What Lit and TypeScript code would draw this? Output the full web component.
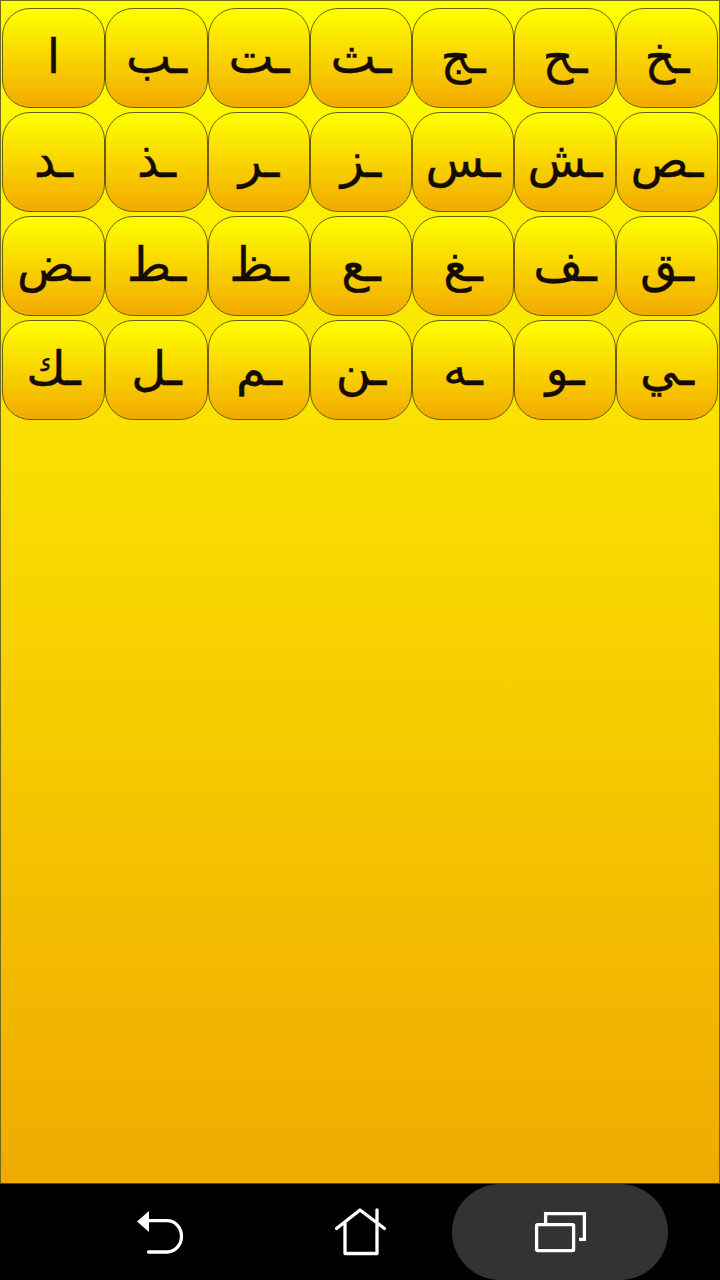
import { LitElement, html, css } from "lit";
import { customElement } from "lit/decorators.js";

const LETTERS = ["ا","ـب","ـت","ـث","ـج","ـح","ـخ","ـد","ـذ","ـر","ـز","ـس","ـش","ـص","ـض","ـط","ـظ","ـع","ـغ","ـف","ـق","ـك","ـل","ـم","ـن","ـه","ـو","ـي"];

@customElement("app-root")
export class AppRoot extends LitElement {
  static styles = css`
    :host { display: flex; flex-direction: column; width: 720px; height: 1280px; font-family: "DejaVu Sans", sans-serif; }
    .main { box-sizing: border-box; height: 1184px; border: 1px solid #6b6b1a; border-bottom: 1px solid #5a4a00; background: linear-gradient(#ffff00, #f0aa00); padding: 7px 1px 0; }
    .grid { display: grid; grid-template-columns: 103px 103px repeat(5, 102px); grid-auto-rows: 100px; row-gap: 4px; }
    .key { box-sizing: border-box; border: 1px solid #6a5c10; border-radius: 28px; background: linear-gradient(#ffff00, #f2aa00); display: flex; align-items: center; justify-content: center; font-size: 48px; line-height: 1; color: #140c00; direction: rtl; padding-bottom: 4px; -webkit-text-stroke: 0.4px #140c00; }
    .nav { flex: 1; background: #000; display: flex; }
    .slot { display: flex; align-items: center; justify-content: center; }
    .back { width: 112px; margin-left: 104px; }
    .home { width: 112px; margin-left: 88px; }
    .rec { width: 216px; margin-left: 36px; background: #333; border-radius: 48px; }
    svg { display: block; fill: none; stroke: #fff; stroke-width: 3.3; }
  `;

  render() {
    return html`
      <div class="main"><div class="grid">${LETTERS.map((l) => html`<div class="key">${l}</div>`)}</div></div>
      <div class="nav">
        <div class="slot back"><svg width="50" height="46" viewBox="0 0 50 46"><path d="M2 12.500 L14 2 V23 Z" fill="#fff" stroke="none"/><path d="M12 11.600 H32 C40.500 11.600 46.500 19 46.500 27.300 C46.500 36 40 43 32 43 H13.500" stroke-linecap="round"/></svg></div>
        <div class="slot home"><svg width="54" height="50" viewBox="0 0 54 50"><path d="M3.500 21.500 L27 3 L51.500 21.500 M12 15 V46.500 H44 V3" stroke-linecap="round" stroke-linejoin="round"/></svg></div>
        <div class="slot rec"><svg width="54" height="44" viewBox="0 0 54 44"><rect x="3.600" y="14.600" width="37" height="26" rx="1"/><path d="M12.600 13 V3.600 H51.400 V29.400 H46"/></svg></div>
      </div>`;
  }
}
